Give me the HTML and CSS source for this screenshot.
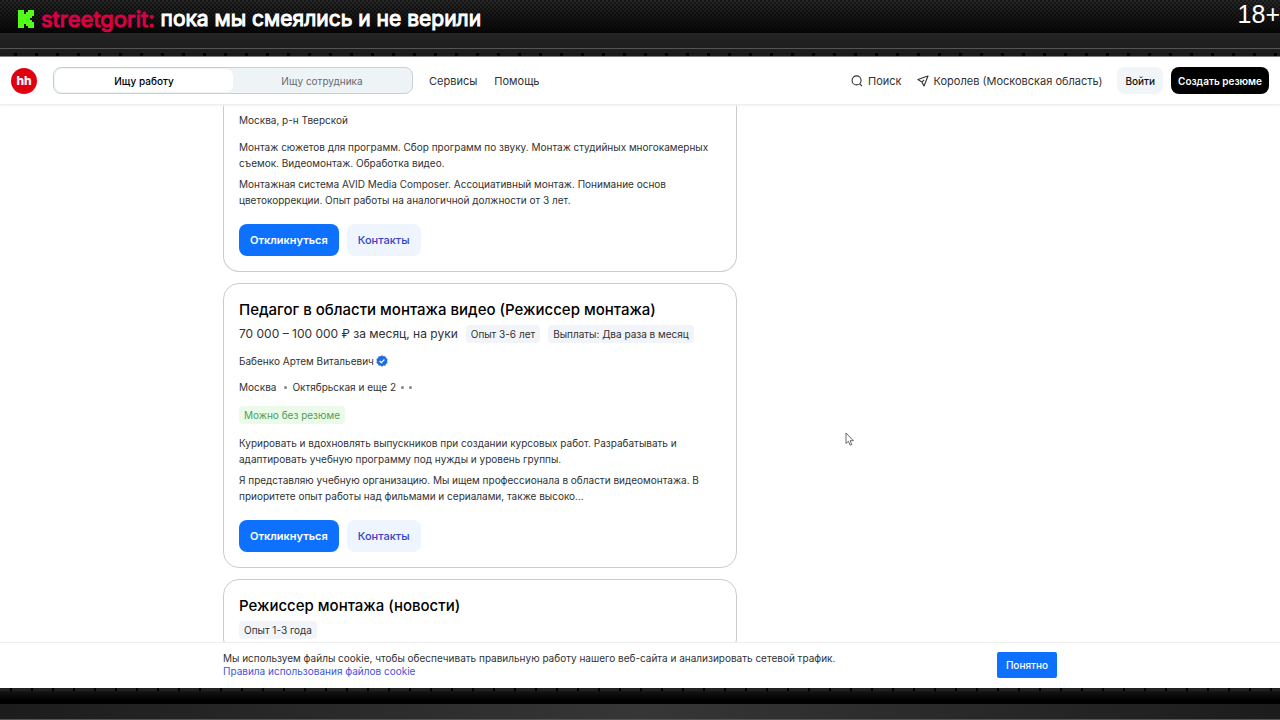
FILE: index.html
```
<!DOCTYPE html>
<html lang="ru">
<head>
	<meta charset="UTF-8">
	<meta name="viewport" content="width=device-width, initial-scale=1.0">
	<title>Вакансии</title>
	<link rel="stylesheet" href="styles.css">
</head>
<body>
	<div class="stream-top">
		<div class="chat-line">
			<svg class="kick" viewBox="0 0 18 20"><path d="M1 1h6v4h2V3h2V1h6v6h-2v2h-2v2h2v2h2v6h-6v-2H9v-2H7v4H1z" fill="#53fc18"/></svg>
			<span class="nick">streetgorit:</span>
			<span class="message">пока мы смеялись и не верили</span>
		</div>
		<span class="age">18+</span>
	</div>
	<div class="stream-edge"></div>

	<header class="header">
		<a class="logo" href="#">hh</a>
		<div class="switch">
			<button class="switch-item active">Ищу работу</button>
			<button class="switch-item">Ищу сотрудника</button>
		</div>
		<nav class="nav">
			<a href="#">Сервисы</a>
			<a href="#">Помощь</a>
		</nav>
		<div class="tools">
			<a href="#">
				<svg width="12" height="12" viewBox="0 0 12 12" fill="none" stroke="#333" stroke-width="1.1"><circle cx="5.6" cy="5.4" r="4.5"/><path d="M8.7 8.7l2.2 2.4"/></svg>
				Поиск
			</a>
			<a href="#">
				<svg width="12" height="12" viewBox="0 0 12 12" fill="none" stroke="#333" stroke-width="1.1" stroke-linejoin="round"><path d="M11 1L.9 4.6l4 2.3L7 11z"/><path d="M4.9 6.9L7.2 4.8"/></svg>
				Королев (Московская область)
			</a>
			<button class="login">Войти</button>
			<button class="create">Создать резюме</button>
		</div>
	</header>

	<main class="main">
		<div class="vacancies">
			<article class="card card-first">
				<p class="place">Москва, р-н Тверской</p>
				<p class="text">Монтаж сюжетов для программ. Сбор программ по звуку. Монтаж студийных многокамерных съемок. Видеомонтаж. Обработка видео.</p>
				<p class="text">Монтажная система AVID Media Composer. Ассоциативный монтаж. Понимание основ цветокоррекции. Опыт работы на аналогичной должности от 3 лет.</p>
				<div class="actions">
					<button class="respond">Откликнуться</button>
					<button class="contacts">Контакты</button>
				</div>
			</article>

			<article class="card">
				<h2>Педагог в области монтажа видео (Режиссер монтажа)</h2>
				<div class="pay">
					<span class="salary">70 000 – 100 000 ₽ за месяц, на руки</span>
					<span class="tag">Опыт 3-6 лет</span>
					<span class="tag">Выплаты: Два раза в месяц</span>
				</div>
				<p class="company">Бабенко Артем Витальевич
					<svg width="12" height="12" viewBox="0 0 12 12"><path d="M6 .3l1.5 1 1.8-.1.7 1.7 1.5 1L11.2 6l.3 1.900L10 9l-.7 1.700-1.800-.1L6 11.700l-1.500-1.100-1.800.1L2 9 .5 7.900.8 6 .5 3.900l1.500-1 .7-1.700 1.800.1z" fill="#1f6be0"/><path d="M3.600 6l1.700 1.700 3.100-3.200" fill="none" stroke="#fff" stroke-width="1.200"/></svg>
				</p>
				<p class="metro"><span class="city">Москва</span><i class="dot"></i><span>Октябрьская и еще 2</span><i class="dot"></i><i class="dot"></i></p>
				<span class="tag tag-green">Можно без резюме</span>
				<p class="text">Курировать и вдохновлять выпускников при создании курсовых работ. Разрабатывать и адаптировать учебную программу под нужды и уровень группы.</p>
				<p class="text">Я представляю учебную организацию. Мы ищем профессионала в области видеомонтажа. В приоритете опыт работы над фильмами и сериалами, также высоко...</p>
				<div class="actions">
					<button class="respond">Откликнуться</button>
					<button class="contacts">Контакты</button>
				</div>
			</article>

			<article class="card">
				<h2>Режиссер монтажа (новости)</h2>
				<div class="pay">
					<span class="tag">Опыт 1-3 года</span>
				</div>
			</article>
		</div>
	</main>

	<div class="cookies">
		<div class="cookies-inner">
			<p>Мы используем файлы cookie, чтобы обеспечивать правильную работу нашего веб-сайта и анализировать сетевой трафик.<br>
			<a href="#">Правила использования файлов cookie</a></p>
			<button class="ok">Понятно</button>
		</div>
	</div>
	<div class="stream-bottom"></div>

	<svg class="cursor" width="9" height="14" viewBox="0 0 9 14"><path d="M1 1v10.500l2.400-2.200 1.700 3.900 1.700-.7-1.700-3.800h3.300z" fill="#fff" stroke="#444" stroke-width=".8"/></svg>
</body>
</html>
```

FILE: styles.css
```
* {
	box-sizing: border-box;
}
body {
	margin: 0;
	height: 100vh;
	display: flex;
	flex-direction: column;
	overflow: hidden;
	font-family: Inter, "Liberation Sans", sans-serif;
	font-size: 10px;
	color: #303233;
	background-color: #fff;
}
p, h2 {
	margin: 0;
}
a {
	color: inherit;
	text-decoration: none;
}
button {
	border: none;
	padding: 0;
	font-family: inherit;
	cursor: pointer;
}

/* stream frame */
.stream-top {
	display: flex;
	justify-content: space-between;
	height: 33px;
	flex-shrink: 0;
	padding-left: 17px;
	color: #fff;
	background: linear-gradient(rgba(0, 0, 0, 0), #050505), repeating-conic-gradient(#292929 0% 25%, #151515 0% 50%) 0 0 / 4px 4px;
}
.chat-line {
	display: flex;
	align-items: center;
	gap: 6px;
	padding-top: 5px;
	font-size: 21px;
	line-height: 28px;
	white-space: nowrap;
}
.kick {
	width: 18px;
	height: 20px;
}
.nick {
	font-size: 22px;
	color: #dc0046;
	-webkit-text-stroke: 1px #dc0046;
}
.message {
	-webkit-text-stroke: 1px #fff;
}
.age {
	font-family: "Liberation Sans", Arial, sans-serif;
	font-size: 25px;
	line-height: 29px;
}
.stream-edge {
	height: 24px;
	flex-shrink: 0;
	border-bottom: 1px solid #777;
	background:
		linear-gradient(#555, #555) 0 15px / 100% 1px no-repeat,
		repeating-linear-gradient(90deg, #1a1a1a 0 14px, #000 14px 17px, #1a1a1a 17px 21px) 0 20px / 100% 3px no-repeat,
		linear-gradient(#242424, #1c1c1c);
}
.stream-bottom {
	height: 32px;
	flex-shrink: 0;
	border-bottom: 1px solid #555;
	background:
		repeating-linear-gradient(90deg, #222 0 10px, #000 10px 12px, #222 12px 21px) 0 0 / 100% 3px no-repeat,
		linear-gradient(90deg, #1c1c1c, #363636 50%, #1c1c1c) 0 16px / 100% 15px no-repeat,
		linear-gradient(#1c1c1c, #000 12px);
}

/* header */
.header {
	display: flex;
	align-items: center;
	height: 48px;
	flex-shrink: 0;
	padding: 0 11px;
	border-bottom: 1px solid #eee;
	box-shadow: 0 1px 2px #f2f2f2;
	font-size: 11px;
	white-space: nowrap;
	z-index: 1;
}
.logo {
	width: 26px;
	height: 26px;
	border-radius: 50%;
	background-color: #e0000f;
	color: #fff;
	font-size: 12px;
	font-weight: 800;
	line-height: 25px;
	text-align: center;
}
.switch {
	display: flex;
	width: 360px;
	height: 27px;
	margin-left: 16px;
	padding: 1px;
	border: 1px solid #c8d0d4;
	border-radius: 8px;
	background-color: #eef3f6;
}
.switch-item {
	flex: 1;
	border-radius: 7px;
	background: none;
	font-size: 10px;
	color: #666b70;
}
.switch-item.active {
	background-color: #fff;
	color: #000;
	font-weight: 500;
}
.nav {
	display: flex;
	gap: 17px;
	margin-left: 16px;
}
.tools {
	display: flex;
	align-items: center;
	gap: 15px;
	margin-left: auto;
}
.tools a {
	display: flex;
	align-items: center;
	gap: 5px;
}
.login, .create {
	height: 27px;
	padding: 0 8px;
	border-radius: 8px;
	font-size: 10px;
	font-weight: 500;
}
.login {
	background-color: #f1f5f7;
	color: #111;
}
.create {
	margin-left: -7px;
	padding: 0 7px;
	background-color: #000;
	color: #fff;
	font-weight: 600;
}

/* vacancies */
.main {
	flex: 1;
	min-height: 0;
	overflow: hidden;
}
.vacancies {
	display: flex;
	flex-direction: column;
	gap: 11px;
	max-width: 834px;
	margin: 0 auto;
	padding-right: 320px;
}
.card {
	padding: 15px;
	border: 1px solid #c9cccf;
	border-radius: 16px;
}
.card-first {
	padding-top: 7px;
	border-top: none;
	border-radius: 0 0 16px 16px;
}
.card h2 {
	font-size: 15px;
	font-weight: 500;
	line-height: 22px;
	color: #000;
}
.place {
	line-height: 16px;
	margin-bottom: 11px;
}
.text {
	line-height: 16px;
	margin-bottom: 5px;
}
.pay {
	display: flex;
	align-items: center;
	gap: 8px;
	margin-top: 4px;
	line-height: 18px;
	white-space: nowrap;
}
.salary {
	font-size: 12px;
}
.tag {
	display: inline-block;
	padding: 0 5px;
	border-radius: 4px;
	background-color: #f1f4f8;
	line-height: 18px;
}
.tag-green {
	margin-bottom: 11px;
	background-color: #eafbea;
	color: #519b5c;
}
.company {
	display: flex;
	align-items: center;
	gap: 2px;
	margin-top: 10px;
	line-height: 16px;
}
.metro {
	display: flex;
	align-items: center;
	gap: 5px;
	margin: 10px 0 11px;
	line-height: 16px;
}
.city {
	margin-right: 3px;
}
.dot {
	width: 3px;
	height: 3px;
	border-radius: 50%;
	background-color: #888;
}
.actions {
	display: flex;
	gap: 8px;
	margin-top: 16px;
}
.respond, .contacts {
	height: 32px;
	padding: 0 11px;
	border-radius: 8px;
	font-size: 11px;
}
.respond {
	background-color: #0d70ff;
	color: #fff;
	font-weight: 600;
}
.contacts {
	background-color: #eef5fe;
	color: #3543c8;
	font-weight: 500;
}

/* cookie notice */
.cookies {
	height: 46px;
	flex-shrink: 0;
	border-top: 1px solid #eee;
}
.cookies-inner {
	display: flex;
	align-items: center;
	justify-content: space-between;
	max-width: 834px;
	height: 44px;
	margin: 0 auto;
	line-height: 13px;
}
.cookies a {
	color: #3f55d8;
}
.ok {
	height: 26px;
	padding: 0 9px;
	border-radius: 2px;
	background-color: #0d70ff;
	color: #fff;
	font-size: 10px;
	font-weight: 500;
}

.cursor {
	position: absolute;
	left: 845px;
	top: 432px;
}
```
